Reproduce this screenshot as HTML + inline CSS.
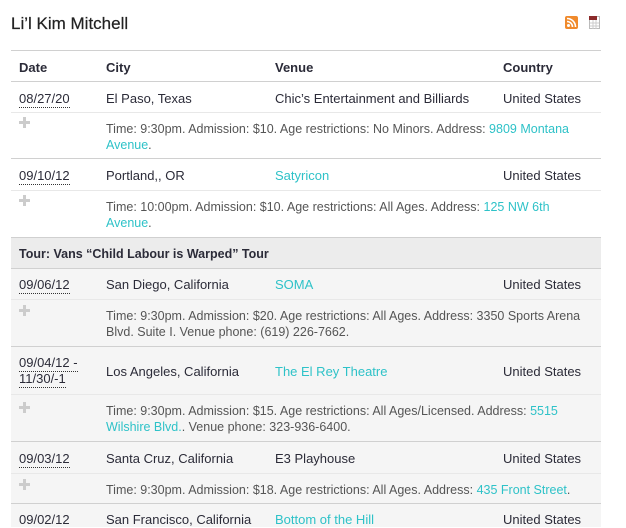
<!DOCTYPE html>
<html><head><meta charset="utf-8"><style>
body{margin:0;width:626px;height:521px;overflow:hidden;background:#fff;font-family:"Liberation Sans",sans-serif;font-size:13px;color:#2b2b38;position:relative}
.a{position:absolute;white-space:nowrap;line-height:16px;margin-top:1px}
.l{position:absolute;left:11px;width:590px;height:1px;background:#d0d0d0}
.ll{position:absolute;left:11px;width:590px;height:1px;background:#e8e8e8}
.d{border-bottom:1px dotted #333;line-height:15px;padding-bottom:1px}
.t{color:#555;font-size:12.5px}
a{color:#2ec2c8;text-decoration:none}
.p{position:absolute;left:19px;width:11px;height:11px}
.p:before{content:"";position:absolute;left:4px;top:0;width:3px;height:11px;background:#ccc}
.p:after{content:"";position:absolute;left:0;top:4px;width:11px;height:3px;background:#ccc}
b{font-weight:bold}
</style></head><body>
<div class="a" style="left:11px;top:13px;font-size:17px;color:#222;line-height:20px;-webkit-text-stroke:0.2px #222">Li’l Kim Mitchell</div>
<svg style="position:absolute;left:565px;top:16px" width="13" height="13"><rect width="13" height="13" rx="2" fill="#f08a2c"/><circle cx="3.5" cy="9.5" r="1.5" fill="#fff"/><path d="M2 5.5a5.5 5.5 0 0 1 5.5 5.5M2 2.5a8.5 8.5 0 0 1 8.5 8.5" stroke="#fff" stroke-width="1.6" fill="none"/></svg>
<svg style="position:absolute;left:589px;top:16px" width="11" height="13"><rect x=".5" y=".5" width="10" height="12" fill="#fff" stroke="#bbb"/><rect width="8" height="4" fill="#8b2a2a"/><path d="M1 7h9M1 10h9M4 4v9M7 4v9" stroke="#ccc"/></svg>

<div class="l" style="top:50px"></div>
<div class="a" style="left:19px;top:59px"><b>Date</b></div>
<div class="a" style="left:106px;top:59px"><b>City</b></div>
<div class="a" style="left:275px;top:59px"><b>Venue</b></div>
<div class="a" style="left:503px;top:59px"><b>Country</b></div>
<div class="l" style="top:81px"></div>

<div class="a" style="left:19px;top:90px"><span class="d">08/27/20</span></div>
<div class="a" style="left:106px;top:90px">El Paso, Texas</div>
<div class="a" style="left:275px;top:90px">Chic’s Entertainment and Billiards</div>
<div class="a" style="left:503px;top:90px">United States</div>
<div class="ll" style="top:112px"></div>
<div class="p" style="top:117px"></div>
<div class="a t" style="left:106px;top:120px">Time: 9:30pm. Admission: $10. Age restrictions: No Minors. Address: <a>9809 Montana</a></div>
<div class="a t" style="left:106px;top:136px"><a>Avenue</a>.</div>
<div class="l" style="top:158px"></div>

<div class="a" style="left:19px;top:167px"><span class="d">09/10/12</span></div>
<div class="a" style="left:106px;top:167px">Portland,, OR</div>
<div class="a" style="left:275px;top:167px"><a>Satyricon</a></div>
<div class="a" style="left:503px;top:167px">United States</div>
<div class="ll" style="top:190px"></div>
<div class="p" style="top:195px"></div>
<div class="a t" style="left:106px;top:198px">Time: 10:00pm. Admission: $10. Age restrictions: All Ages. Address: <a>125 NW 6th</a></div>
<div class="a t" style="left:106px;top:214px"><a>Avenue</a>.</div>

<div style="position:absolute;left:11px;top:237px;width:590px;height:290px;background:#f5f5f5"></div>
<div style="position:absolute;left:11px;top:237px;width:590px;height:31px;background:#ececec"></div>
<div class="l" style="top:237px"></div>
<div class="a" style="left:19px;top:245px;font-size:12.5px"><b>Tour: Vans “Child Labour is Warped” Tour</b></div>
<div class="l" style="top:268px"></div>

<div class="a" style="left:19px;top:276px"><span class="d">09/06/12</span></div>
<div class="a" style="left:106px;top:276px">San Diego, California</div>
<div class="a" style="left:275px;top:276px"><a>SOMA</a></div>
<div class="a" style="left:503px;top:276px">United States</div>
<div class="ll" style="top:299px"></div>
<div class="p" style="top:305px"></div>
<div class="a t" style="left:106px;top:307px">Time: 9:30pm. Admission: $20. Age restrictions: All Ages. Address: 3350 Sports Arena</div>
<div class="a t" style="left:106px;top:323px">Blvd. Suite I. Venue phone: (619) 226-7662.</div>
<div class="l" style="top:346px"></div>

<div class="a" style="left:19px;top:354px;line-height:16px"><span class="d">09/04/12 -</span><br><span class="d">11/30/-1</span></div>
<div class="a" style="left:106px;top:363px">Los Angeles, California</div>
<div class="a" style="left:275px;top:363px"><a>The El Rey Theatre</a></div>
<div class="a" style="left:503px;top:363px">United States</div>
<div class="ll" style="top:394px"></div>
<div class="p" style="top:402px"></div>
<div class="a t" style="left:106px;top:402px">Time: 9:30pm. Admission: $15. Age restrictions: All Ages/Licensed. Address: <a>5515</a></div>
<div class="a t" style="left:106px;top:418px"><a>Wilshire Blvd.</a>. Venue phone: 323-936-6400.</div>
<div class="l" style="top:441px"></div>

<div class="a" style="left:19px;top:450px"><span class="d">09/03/12</span></div>
<div class="a" style="left:106px;top:450px">Santa Cruz, California</div>
<div class="a" style="left:275px;top:450px">E3 Playhouse</div>
<div class="a" style="left:503px;top:450px">United States</div>
<div class="ll" style="top:473px"></div>
<div class="p" style="top:479px"></div>
<div class="a t" style="left:106px;top:481px">Time: 9:30pm. Admission: $18. Age restrictions: All Ages. Address: <a>435 Front Street</a>.</div>
<div class="l" style="top:503px"></div>

<div class="a" style="left:19px;top:511px">09/02/12</div>
<div class="a" style="left:106px;top:511px">San Francisco, California</div>
<div class="a" style="left:275px;top:511px"><a>Bottom of the Hill</a></div>
<div class="a" style="left:503px;top:511px">United States</div>
</body></html>
